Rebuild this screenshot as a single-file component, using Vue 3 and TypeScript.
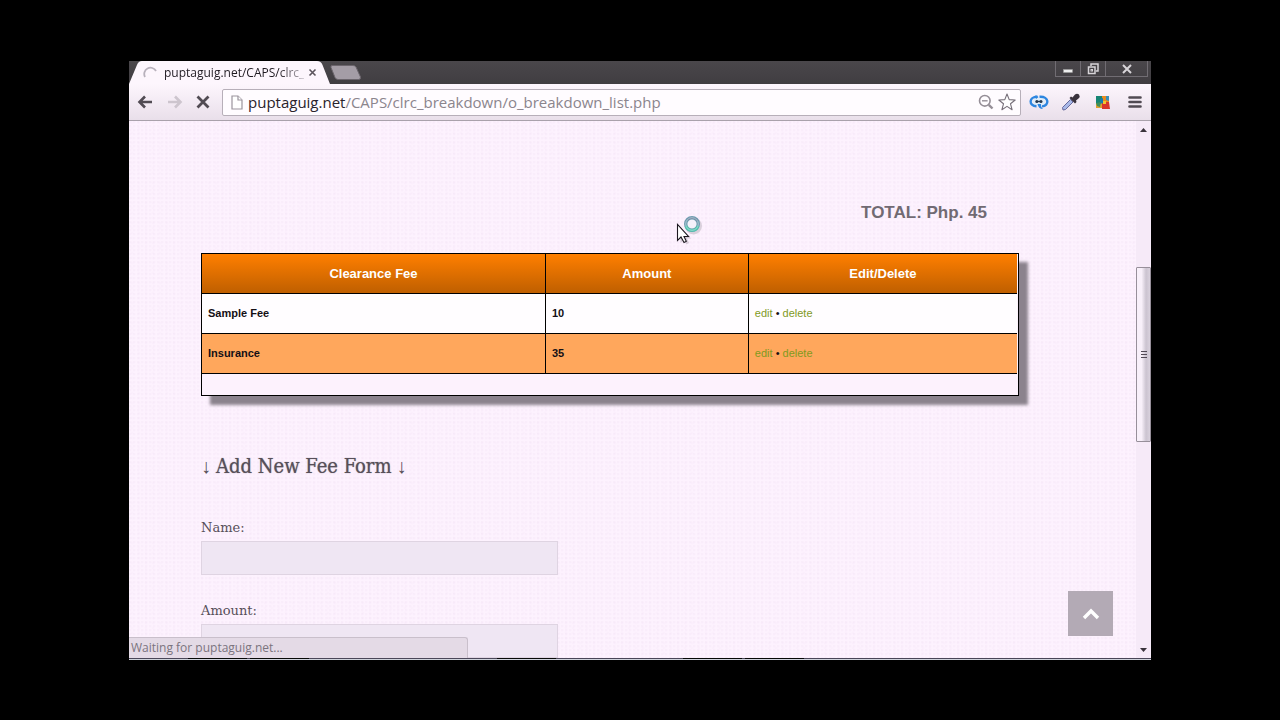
<script setup lang="ts">
import { ref } from 'vue'

interface Fee {
  id: number
  name: string
  amount: number
}

const fees = ref<Fee[]>([
  { id: 1, name: 'Sample Fee', amount: 10 },
  { id: 2, name: 'Insurance', amount: 35 },
])
const feeName = ref('')
const feeAmount = ref('')
</script>

<template>
  <div class="desktop">
    <div class="window">
      <header class="titlebar">
        <div class="tab">
          <svg class="tab-shape" viewBox="0 0 202 23" preserveAspectRatio="none" aria-hidden="true">
            <path d="M0 23 L8 4 Q9.500 0 13 0 H189 Q193 0 194.500 4 L202 23 Z" fill="#fdf6fd" />
          </svg>
          <svg class="spinner" width="14" height="14" viewBox="0 0 14 14" aria-hidden="true">
            <path d="M2 11 A6 6 0 0 1 13 5" fill="none" stroke="#b8b1bc" stroke-width="1.800" />
          </svg>
          <span class="tab-title">puptaguig.net/CAPS/clrc_</span>
          <button class="tab-close" aria-label="Close tab">
            <svg width="9" height="9" viewBox="0 0 9 9"><path d="M1.500 1.500 L7.500 7.500 M7.500 1.500 L1.500 7.500" stroke="#5b545c" stroke-width="1.600" /></svg>
          </button>
        </div>
        <button class="new-tab" aria-label="New tab">
          <svg width="32" height="15" viewBox="0 0 32 15"><path d="M2 .5 H23 Q25 .5 26 2 L30.500 12 Q31 14.500 28.500 14.500 H8 Q6 14.500 5 12.500 L1 2.500 Q.5 .5 2 .5 Z" fill="#a49da6" stroke="#6b656c" /></svg>
        </button>
        <div class="controls">
          <button class="ctl" aria-label="Minimize">
            <svg width="12" height="12" viewBox="0 0 12 12"><rect x="1.500" y="6.500" width="9" height="3" fill="#eee" stroke="#999" stroke-width=".5" /></svg>
          </button>
          <button class="ctl" aria-label="Restore">
            <svg width="12" height="12" viewBox="0 0 12 12" fill="none" stroke="#d8d5d9" stroke-width="1.500"><path d="M4 3 V1 H11 V8 H9" /><rect x="1.500" y="4" width="6.500" height="6.500" /><rect x="4" y="6.500" width="1.500" height="1.500" stroke-width="1" /></svg>
          </button>
          <button class="ctl close" aria-label="Close">
            <svg width="12" height="12" viewBox="0 0 12 12"><path d="M2 2 L10 10 M10 2 L2 10" stroke="#d8d5d9" stroke-width="2" /></svg>
          </button>
        </div>
      </header>

      <div class="toolbar">
        <button class="tool" aria-label="Back">
          <svg width="16" height="14" viewBox="0 0 16 14"><path d="M15 7 H3 M8 1.500 L2.500 7 L8 12.500" fill="none" stroke="#514b53" stroke-width="2.600" /></svg>
        </button>
        <button class="tool forward" aria-label="Forward">
          <svg width="16" height="14" viewBox="0 0 16 14"><path d="M1 7 H13 M8 1.500 L13.500 7 L8 12.500" fill="none" stroke="#cdc5ce" stroke-width="2.600" /></svg>
        </button>
        <button class="tool stop" aria-label="Stop">
          <svg width="14" height="14" viewBox="0 0 14 14"><path d="M1.500 1.500 L12.500 12.500 M12.500 1.500 L1.500 12.500" stroke="#514b53" stroke-width="2.800" /></svg>
        </button>
        <div class="address">
          <svg width="12" height="15" viewBox="0 0 12 15" fill="#fff" stroke="#9b949d" stroke-width="1.200"><path d="M1 1 H7 L11 5 V14 H1 Z" /><path d="M7 1 V5 H11" /></svg>
          <span class="url"><span class="host">puptaguig.net</span>/CAPS/clrc_breakdown/o_breakdown_list.php</span>
          <button class="tool" aria-label="Zoom">
            <svg width="16" height="16" viewBox="0 0 16 16" fill="none" stroke="#958e97"><circle cx="6.800" cy="6.800" r="5.300" stroke-width="1.600" /><path d="M4 6.800 H9.600" stroke-width="1.400" /><path d="M10.800 10.800 L14.500 14.500" stroke-width="2.400" /></svg>
          </button>
          <button class="tool star" aria-label="Bookmark this page">
            <svg width="18" height="18" viewBox="0 0 18 18"><path d="M9 1 L11.200 6.600 L17.200 7 L12.500 10.800 L14.100 16.700 L9 13.400 L3.900 16.700 L5.500 10.800 L.8 7 L6.800 6.600 Z" fill="#fff" stroke="#77707a" stroke-width="1.100" stroke-linejoin="round" /></svg>
          </button>
        </div>
        <div class="extensions">
          <button class="tool" aria-label="Chat extension">
            <svg width="20" height="16" viewBox="0 0 20 16">
              <ellipse cx="10" cy="7.500" rx="6.500" ry="4.200" fill="#dfecf8" />
              <path d="M8.500 2.800 C-.5 2.500 -.5 12 7.500 12.200 M10.500 2.800 C20.500 2 20.500 12 13 12.400" fill="none" stroke="#2d86e0" stroke-width="2.400" />
              <path d="M6.500 1 L9.500 3 L7 5 Z M8.500 10 C9 13 11 15 14 15 C12 13.500 12 11.500 12 10 Z" fill="#2d86e0" />
              <path d="M7 7.500 H12.500" stroke="#26394f" stroke-width="1.400" />
              <circle cx="7.800" cy="7.500" r="1.500" fill="#26394f" /><circle cx="12" cy="7.500" r="1.500" fill="#26394f" />
            </svg>
          </button>
          <button class="tool" aria-label="Colour picker">
            <svg width="20" height="18" viewBox="0 0 20 18">
              <path d="M2 17 L1.500 14.500 L9.500 6.500 L12 9 L4.500 16.500 Z" fill="#a9b9e8" stroke="#66699c" />
              <path d="M8.500 5 L10 3.500 L11.500 4.500 L14 1.500 Q16 0 18 1.500 Q19.500 3.500 17.500 5.500 L15 7.500 L15.500 9 L14 10.500 Z" fill="#39323c" />
            </svg>
          </button>
          <button class="tool" aria-label="Mosaic extension">
            <svg width="16" height="15" viewBox="0 0 16 15">
              <path d="M1 1 H7 V8 H1 Z" fill="#168574" /><path d="M7 1 H14 V8 H7 Z" fill="#e98b20" />
              <path d="M1 8 H8 V13 H1 Z" fill="#e0a02c" /><path d="M7 7 H14 L15 14 H7 Z" fill="#d9342b" />
              <path d="M5 4 L8 3 V8 L5 9 Z" fill="#167ab0" /><path d="M8 6 H11 V9 H8 Z" fill="#f1c431" /><path d="M1 8 L6 7 L5 12 L2 11 Z" fill="#3d8f5b" />
              <path d="M11 1 H14 V6 L11 5 Z" fill="#398fb8" />
            </svg>
          </button>
          <button class="tool" aria-label="Menu">
            <svg width="14" height="14" viewBox="0 0 14 14"><path d="M1.500 2.500 H12.500 M1.500 7 H12.500 M1.500 11.500 H12.500" stroke="#514b53" stroke-width="2.600" stroke-linecap="round" /></svg>
          </button>
        </div>
      </div>

      <div class="viewport">
        <main class="page">
          <p class="total">TOTAL: Php. 45</p>
          <div class="fee-box">
            <table class="fees">
              <thead>
                <tr>
                  <th class="col-name">Clearance Fee</th>
                  <th class="col-amount">Amount</th>
                  <th>Edit/Delete</th>
                </tr>
              </thead>
              <tbody>
                <tr v-for="fee in fees" :key="fee.id">
                  <td>{{ fee.name }}</td>
                  <td>{{ fee.amount }}</td>
                  <td class="actions"><a href="#edit">edit</a> • <a href="#delete">delete</a></td>
                </tr>
              </tbody>
            </table>
          </div>
          <h2><span class="arrow">↓ </span>Add New Fee Form<span class="arrow"> ↓</span></h2>
          <form @submit.prevent>
            <label for="fee-name">Name:</label>
            <input id="fee-name" v-model="feeName" type="text" />
            <label for="fee-amount">Amount:</label>
            <input id="fee-amount" v-model="feeAmount" type="text" />
          </form>
        </main>
        <div class="scrollbar" aria-hidden="true">
          <svg width="7" height="4" viewBox="0 0 7 4"><path d="M0 4 L3.500 0 L7 4 Z" fill="#3a333c" /></svg>
          <div class="track"><div class="thumb"><i></i><i></i><i></i></div></div>
          <svg width="7" height="4" viewBox="0 0 7 4"><path d="M0 0 L3.500 4 L7 0 Z" fill="#3a333c" /></svg>
        </div>
        <button class="to-top" aria-label="Back to top">
          <svg width="18" height="12" viewBox="0 0 18 12"><path d="M2 10 L9 3 L16 10" fill="none" stroke="#fff" stroke-width="3.400" /></svg>
        </button>
        <div class="status">Waiting for puptaguig.net...</div>
        <svg class="cursor" width="28" height="30" viewBox="0 0 28 30" aria-hidden="true">
          <circle cx="17.500" cy="11" r="7" fill="none" stroke="#8c8590" stroke-opacity=".3" stroke-width="3" />
          <circle cx="16" cy="9" r="6.300" fill="#f3f1fa" stroke="#6f9cb0" stroke-width="3.400" />
          <path d="M10 11 A6.300 6.300 0 0 0 22 11" fill="none" stroke="#4fc4ad" stroke-width="2.800" />
          <path d="M11.500 5 A6.300 6.300 0 0 1 21.500 6" fill="none" stroke="#74849f" stroke-width="1.500" />
          <circle cx="16" cy="9" r="6.300" fill="none" stroke="#cfe6ec" stroke-width=".6" />
          <path d="M3 11 V27 L6.300 23.500 L9 28.500 L11.500 27 L9.500 22.500 H13.500 Z" transform="translate(1.500 1)" fill="#8c8590" opacity=".35" />
          <path d="M1.500 9.500 V25.500 L5 22 L8 27.500 L10.300 26.200 L8 21.500 H12.500 Z" fill="#fff" stroke="#1d1820" stroke-width="1.100" />
        </svg>
      </div>
      <div class="taskbar" aria-hidden="true">
        <span class="task"></span><span class="task"></span><span class="task third"></span><span class="task fourth"></span><span class="task"></span>
      </div>
    </div>
  </div>
</template>

<style>
body {
  margin: 0;
  background: #000;
}
</style>

<style scoped>
* {
  box-sizing: border-box;
}
button {
  padding: 0;
  border: 0;
  background: none;
}
svg {
  display: block;
  flex: none;
}
.desktop {
  display: flex;
  height: 100vh;
  padding: 61px 129px 60px;
  background: #000;
  font-family: "Open Sans", "Noto Sans", sans-serif;
}
.window {
  display: flex;
  flex: 1;
  flex-direction: column;
  min-width: 0;
  overflow: hidden;
}
.titlebar {
  display: flex;
  height: 23px;
  flex: none;
  background: linear-gradient(#4a474b, #403d41);
}
.tab {
  position: relative;
  display: flex;
  align-items: center;
  width: 201px;
  padding: 0 10px 0 14px;
}
.tab-shape {
  position: absolute;
  inset: 0;
  width: 100%;
  height: 100%;
}
.spinner,
.tab-title,
.tab-close {
  position: relative;
}
.tab-title {
  flex: none;
  margin-left: 7px;
  font-size: 12px;
  line-height: 22px;
  white-space: nowrap;
  background: linear-gradient(90deg, #1f1a21 82%, #c9c2cb);
  -webkit-background-clip: text;
  background-clip: text;
  color: transparent;
}
.tab-close {
  margin-left: auto;
  margin-right: 3px;
}
.new-tab {
  align-self: center;
}
.controls {
  display: flex;
  height: 16px;
  margin: 0 3px 0 auto;
  border: 1px solid #716d73;
  border-top: 0;
}
.ctl {
  display: flex;
  align-items: center;
  justify-content: center;
  width: 25px;
  border-right: 1px solid #716d73;
}
.close {
  width: 41px;
  border-right: 0;
}
.toolbar {
  display: flex;
  align-items: center;
  flex: none;
  height: 37px;
  padding: 0 0 0 8px;
  border-bottom: 1px solid #a9a1ab;
  background: linear-gradient(#fdf6fd, #e9dfea);
}
.forward {
  margin-left: 14px;
}
.stop {
  margin-left: 13px;
}
.address {
  display: flex;
  flex: 1;
  align-items: center;
  min-width: 0;
  height: 27px;
  margin-left: 12px;
  padding: 0 4px 0 8px;
  border: 1px solid #b7afb9;
  border-radius: 2px;
  background: #fffcff;
}
.url {
  flex: 1;
  margin-left: 5px;
  overflow: hidden;
  color: #8b858d;
  font-size: 15px;
  line-height: 24px;
  white-space: nowrap;
}
.host {
  color: #29232b;
}
.star {
  margin-left: 4px;
}
.extensions {
  display: grid;
  grid-template-columns: repeat(4, 32px);
  justify-items: center;
  align-items: center;
  margin-left: 2px;
}
.viewport {
  position: relative;
  display: flex;
  flex: 1;
  min-height: 0;
  overflow: hidden;
}
.page {
  flex: 1;
  min-width: 0;
  padding: 81px 117px 0 72px;
  background-color: #fdf2fe;
  background-image:
    radial-gradient(circle at 1px 1px, rgba(190, 140, 200, 0.05) 1px, transparent 2px),
    radial-gradient(circle at 3px 2px, rgba(190, 150, 200, 0.03) 1px, transparent 2px);
  background-size: 4px 4px, 7px 5px;
}
.total {
  margin: 0;
  padding-right: 32px;
  color: #716a73;
  font: bold 17px/22px "Liberation Sans", Arial, sans-serif;
  text-align: right;
}
.fee-box {
  margin-top: 29px;
  padding: 0 1px 21px 0;
  border: 1px solid #000;
  box-shadow: 9px 9px 3px #8b838d;
  background: #fdf2fd;
}
.fees {
  width: 100%;
  border-collapse: separate;
  border-spacing: 0;
  table-layout: fixed;
  color: #140f15;
  font: bold 11px/15px "Liberation Sans", Arial, sans-serif;
}
.col-name {
  width: 42.2%;
}
.col-amount {
  width: 24.9%;
}
th,
td {
  height: 40px;
  padding: 0 6px;
  border-right: 1px solid #000;
  border-bottom: 1px solid #000;
}
th:last-child,
td:last-child {
  border-right: 0;
}
th {
  background: linear-gradient(#ff7f00, #bf5f00);
  color: #fff;
  font-size: 13px;
}
td {
  background: #fffdff;
}
tbody tr:nth-child(even) td {
  background: #ffa75c;
}
.actions {
  font-weight: normal;
}
.actions a {
  color: #7f9a1e;
  text-decoration: none;
}
h2 {
  margin: 56px 0 0;
  color: #574f59;
  font: normal 20px/28px "DejaVu Serif Condensed", "DejaVu Serif", serif;
  text-shadow: 0 0 1px #857d87;
}
.arrow {
  font-family: "Liberation Serif", serif;
  text-shadow: none;
}
form {
  display: flex;
  flex-direction: column;
  align-items: flex-start;
  margin-top: 38px;
}
label {
  color: #574f59;
  font: normal 13px/20px "DejaVu Serif", serif;
}
input {
  width: 357px;
  max-width: 100%;
  height: 34px;
  margin: 3px 0 26px;
  padding: 0 10px;
  border: 1px solid #dfd4e2;
  border-radius: 0;
  background: #efe6f3;
}
.scrollbar {
  display: flex;
  flex-direction: column;
  align-items: center;
  width: 15px;
  padding: 7px 0 6px;
  background: #f6eaf8;
}
.track {
  flex: 1;
  width: 100%;
  padding-top: 135px;
}
.thumb {
  display: flex;
  flex-direction: column;
  align-items: center;
  justify-content: center;
  gap: 2px;
  height: 175px;
  border: 1px solid #978f9a;
  border-radius: 1px;
  background: linear-gradient(90deg, #f8f0fa 35%, #cbc3d0 70%, #d9d1dd);
}
.thumb i {
  width: 6px;
  height: 1px;
  background: #524a56;
}
.to-top {
  position: absolute;
  right: 38px;
  bottom: 22px;
  display: flex;
  align-items: center;
  justify-content: center;
  width: 45px;
  height: 45px;
  background: #b3aab5;
}
.status {
  position: absolute;
  bottom: 0;
  left: 0;
  width: 339px;
  height: 21px;
  padding-left: 2px;
  border: 1px solid #c9bfcb;
  border-bottom: 0;
  border-left: 0;
  border-radius: 0 3px 0 0;
  background: #e4dae6;
  color: #7b747e;
  font-size: 12px;
  line-height: 20px;
}
.cursor {
  position: absolute;
  top: 94px;
  left: 547px;
}
.taskbar {
  display: flex;
  flex: none;
  gap: 3px;
  height: 2px;
  padding-left: 59px;
  border-bottom: 1px solid #cfd3dc;
  background: #4a4658;
}
.task {
  width: 59px;
  height: 1px;
  background: #070807;
}
.third {
  margin-left: 185px;
}
.fourth {
  margin-left: 124px;
}
</style>
